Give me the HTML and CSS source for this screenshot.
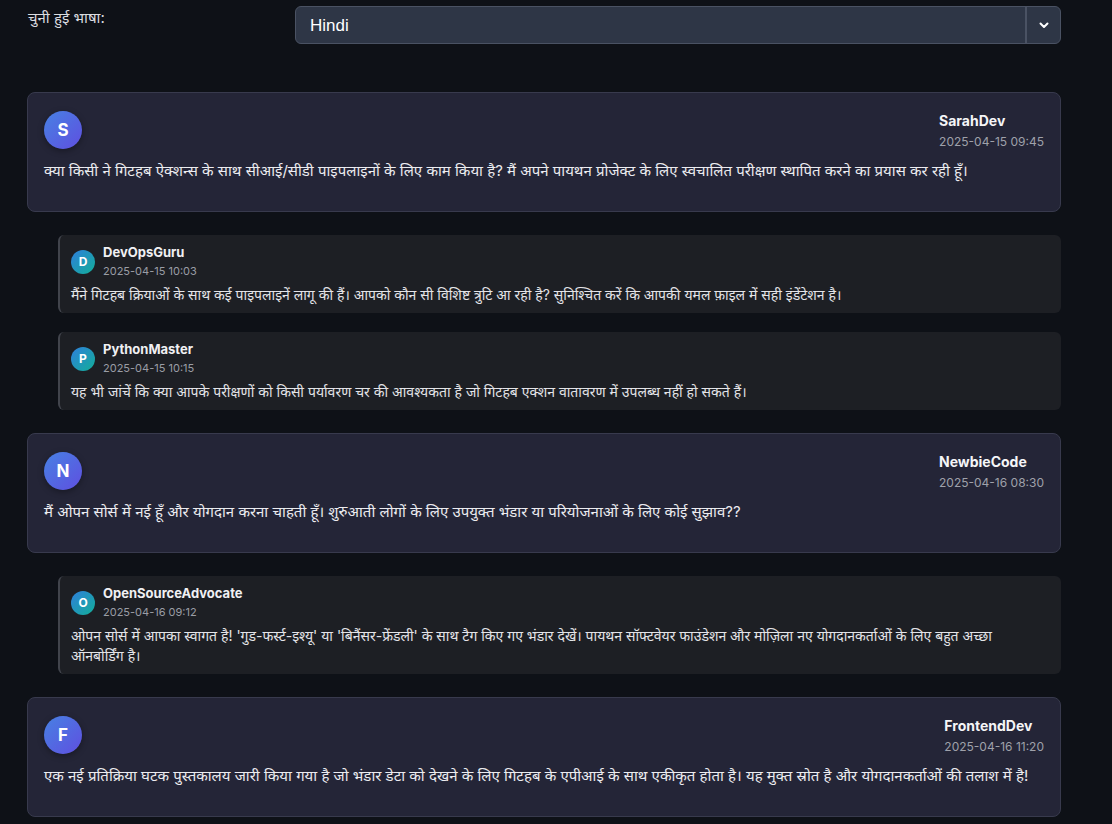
FILE: index.html
```html
<!DOCTYPE html>
<html lang="hi">
<head>
<meta charset="utf-8">
<title>Forum</title>
<link rel="stylesheet" href="styles.css">
</head>
<body>
<div class="page">
  <div class="lang-row">
    <div class="lang-label">चुनी हुई भाषा:</div>
    <div class="select">
      <span class="select-value">Hindi</span>
      <span class="select-btn">
        <svg width="12" height="12" viewBox="0 0 12 12"><path d="M2.5 4.5 L6 8 L9.5 4.5" fill="none" stroke="#ffffff" stroke-width="2" stroke-linecap="round" stroke-linejoin="round"/></svg>
      </span>
    </div>
  </div>

  <div class="threads">
    <div class="post">
      <div class="post-head">
        <div class="avatar">S</div>
        <div class="meta">
          <div class="name">SarahDev</div>
          <div class="date">2025-04-15 09:45</div>
        </div>
      </div>
      <p class="post-text">क्या किसी ने गिटहब ऐक्शन्स के साथ सीआई/सीडी पाइपलाइनों के लिए काम किया है? मैं अपने पायथन प्रोजेक्ट के लिए स्वचालित परीक्षण स्थापित करने का प्रयास कर रही हूँ।</p>
    </div>
    <div class="replies">
      <div class="reply">
        <div class="reply-head">
          <div class="avatar-sm">D</div>
          <div class="reply-meta">
            <div class="reply-name">DevOpsGuru</div>
            <div class="reply-date">2025-04-15 10:03</div>
          </div>
        </div>
        <p class="reply-text">मैंने गिटहब क्रियाओं के साथ कई पाइपलाइनें लागू की हैं। आपको कौन सी विशिष्ट त्रुटि आ रही है? सुनिश्चित करें कि आपकी यमल फ़ाइल में सही इंडेंटेशन है।</p>
      </div>
      <div class="reply">
        <div class="reply-head">
          <div class="avatar-sm">P</div>
          <div class="reply-meta">
            <div class="reply-name">PythonMaster</div>
            <div class="reply-date">2025-04-15 10:15</div>
          </div>
        </div>
        <p class="reply-text">यह भी जांचें कि क्या आपके परीक्षणों को किसी पर्यावरण चर की आवश्यकता है जो गिटहब एक्शन वातावरण में उपलब्ध नहीं हो सकते हैं।</p>
      </div>
    </div>

    <div class="post">
      <div class="post-head">
        <div class="avatar">N</div>
        <div class="meta">
          <div class="name">NewbieCode</div>
          <div class="date">2025-04-16 08:30</div>
        </div>
      </div>
      <p class="post-text">मैं ओपन सोर्स में नई हूँ और योगदान करना चाहती हूँ। शुरुआती लोगों के लिए उपयुक्त भंडार या परियोजनाओं के लिए कोई सुझाव??</p>
    </div>
    <div class="replies">
      <div class="reply">
        <div class="reply-head">
          <div class="avatar-sm">O</div>
          <div class="reply-meta">
            <div class="reply-name">OpenSourceAdvocate</div>
            <div class="reply-date">2025-04-16 09:12</div>
          </div>
        </div>
        <p class="reply-text">ओपन सोर्स में आपका स्वागत है! 'गुड-फर्स्ट-इश्यू' या 'बिनैंसर-फ्रेंडली' के साथ टैग किए गए भंडार देखें। पायथन सॉफ्टवेयर फाउंडेशन और मोज़िला नए योगदानकर्ताओं के लिए बहुत अच्छा ऑनबोर्डिंग है।</p>
      </div>
    </div>

    <div class="post">
      <div class="post-head">
        <div class="avatar">F</div>
        <div class="meta">
          <div class="name">FrontendDev</div>
          <div class="date">2025-04-16 11:20</div>
        </div>
      </div>
      <p class="post-text">एक नई प्रतिक्रिया घटक पुस्तकालय जारी किया गया है जो भंडार डेटा को देखने के लिए गिटहब के एपीआई के साथ एकीकृत होता है। यह मुक्त स्रोत है और योगदानकर्ताओं की तलाश में है!</p>
    </div>
  </div>
</div>
</body>
</html>
```

FILE: styles.css
```css
* { box-sizing: border-box; }
html, body {
  margin: 0;
  background: #0e1117;
}
body {
  font-family: "Inter", "Noto Sans", sans-serif;
  color: #e6e6ea;
  overflow: hidden;
}
.page {
  width: 1034px;
  margin-left: 27px;
  padding-top: 6px;
}
.lang-row {
  display: grid;
  grid-template-columns: 252px 1fr;
  gap: 16px;
}
.lang-label {
  font-size: 15px;
  line-height: 20px;
  padding-top: 2px;
  padding-left: 1px;
  color: #dcdde0;
}
.select {
  height: 38px;
  background: #2e3646;
  border: 1px solid #4a5263;
  border-radius: 6px;
  display: flex;
  align-items: stretch;
}
.select-value {
  flex: 1;
  display: flex;
  align-items: center;
  padding-left: 14px;
  padding-top: 2px;
  font-family: "Liberation Sans", Arial, sans-serif;
  font-size: 17px;
  color: #ffffff;
}
.select-btn {
  width: 35px;
  border-left: 2px solid #4a5263;
  display: flex;
  align-items: center;
  justify-content: center;
}
.threads {
  margin-top: 48px;
}
.post {
  background: #242537;
  border: 1px solid #383a4d;
  border-radius: 8px;
  padding: 18px 16px 28px 16px;
  margin-bottom: 23px;
}
.post-head {
  display: flex;
  justify-content: space-between;
  align-items: flex-start;
}
.avatar {
  width: 38px;
  height: 38px;
  border-radius: 50%;
  background: linear-gradient(135deg, #4781e3 0%, #5f4fe0 100%);
  color: #ffffff;
  font-weight: 700;
  font-size: 17px;
  display: flex;
  align-items: center;
  justify-content: center;
  box-shadow: 0 2px 6px rgba(0, 0, 0, 0.35);
}
.meta {
  padding-top: 0;
}
.name {
  font-size: 14px;
  font-weight: 700;
  line-height: 20px;
  color: #f5f5f7;
}
.date {
  font-size: 12px;
  line-height: 20px;
  color: #9fa1aa;
  margin-top: 1px;
}
.post-text {
  margin: 7px 0 0 0;
  font-size: 15px;
  line-height: 24px;
  color: #ececf0;
}
.replies {
  margin-left: 31px;
  display: flex;
  flex-direction: column;
  gap: 19px;
  margin-bottom: 23px;
}
.reply {
  background: #1d1f24;
  border-left: 2px solid #41444c;
  border-radius: 6px;
  padding: 8px 16px 8px 11px;
}
.reply-head {
  display: flex;
  align-items: center;
  gap: 8px;
}
.avatar-sm {
  width: 24px;
  height: 24px;
  border-radius: 50%;
  background: linear-gradient(135deg, #2f7fdc 0%, #12ae98 100%);
  color: #ffffff;
  font-weight: 700;
  font-size: 12px;
  display: flex;
  align-items: center;
  justify-content: center;
}
.reply-name {
  font-size: 13px;
  font-weight: 700;
  line-height: 18px;
  color: #f0f0f3;
}
.reply-date {
  font-size: 11px;
  line-height: 18px;
  color: #9a9da5;
  margin-top: 1px;
}
.reply-text {
  margin: 5px 0 0 0;
  font-size: 14px;
  line-height: 20px;
  color: #e4e4e8;
}
```
